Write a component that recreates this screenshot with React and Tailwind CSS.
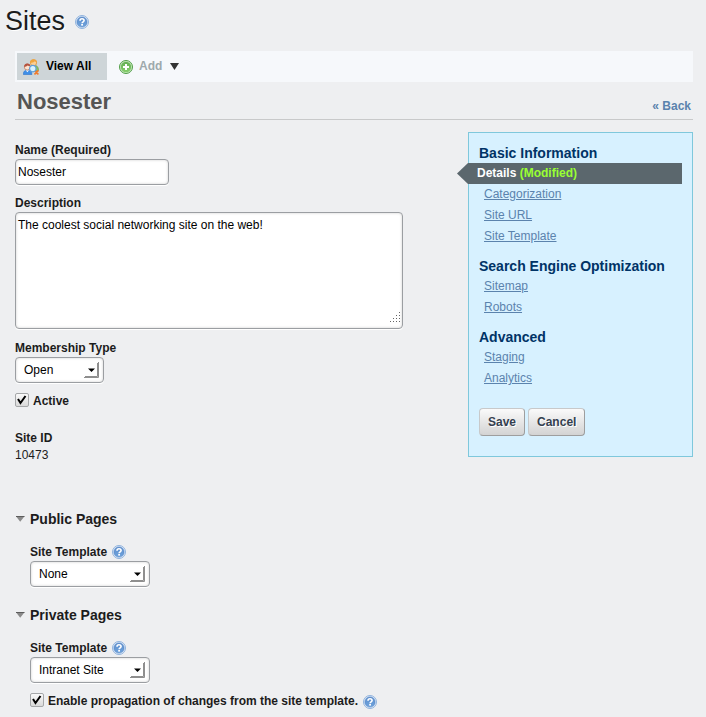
import { useState } from "react";

function HelpIcon({ label = "Help" }) {
  return (
    <svg role="img" aria-label={label} className="h-[14px] w-[14px] shrink-0" viewBox="0 0 14 14">
      <defs>
        <linearGradient id="help-fill" x1="0" y1="0" x2="0" y2="1">
          <stop offset="0" stopColor="#5f8fcd" />
          <stop offset="1" stopColor="#6fa3dc" />
        </linearGradient>
      </defs>
      <circle cx="7" cy="7" r="6.5" fill="#dfeaf8" stroke="#8fb2dd" strokeWidth="1" />
      <circle cx="7" cy="7" r="5.1" fill="url(#help-fill)" stroke="#4c7fc0" strokeWidth=".5" />
      <path d="M5 5.700C5 4.400 5.900 3.700 7 3.700s2.100.6 2.100 1.800C9.100 6.800 7.100 6.800 7.100 8.200" fill="none" stroke="#fff" strokeWidth="1.600" />
      <rect x="6.200" y="9" width="1.800" height="1.600" fill="#fff" />
    </svg>
  );
}

function UsersIcon() {
  return (
    <svg aria-hidden="true" className="h-4 w-4 shrink-0" viewBox="0 0 16 16">
      <path d="M8 9c0-2 1-2.800 3-2.800s4.500.8 4.500 5.300H8z" fill="#8fc45c" stroke="#6a9c42" strokeWidth=".6" />
      <circle cx="10.500" cy="3.800" r="3.100" fill="#fbcf94" stroke="#dd9334" strokeWidth=".8" />
      <path d="M7 4.200C6.800 1.200 8.400.2 10.600.2s3.700 1.200 3.400 4c-.9-1-1.500-1.500-2.100-1.900-1 .9-3 1.600-4.900 1.900z" fill="#f0a53e" />
      <path d="M.3 15.500c0-3 1.300-4.300 4-4.300s4.600 1.300 4.600 4.300z" fill="#3f8fe8" stroke="#2d74cc" strokeWidth=".6" />
      <path d="M2.800 11.300l1.600 1.900 1.600-1.900z" fill="#fff" />
      <circle cx="4.300" cy="8" r="3" fill="#fde3cf" stroke="#b0644a" strokeWidth=".6" />
      <path d="M1.200 8c-.3-2.400 1.100-3.600 3.100-3.600s3.200 1.200 3 2.900c-1.200 0-2-.3-2.600-.8-.9.900-2.200 1.400-3.500 1.500z" fill="#b5533f" />
      <path d="M12 12l2.800 2.800M14.800 12L12 14.800" stroke="#f07a2c" strokeWidth="1.800" strokeLinecap="round" />
      <circle cx="9.800" cy="9.600" r="3.200" fill="#d8f2ff" stroke="#5f9fd8" strokeWidth="1.200" />
    </svg>
  );
}

function AddIcon() {
  return (
    <svg aria-hidden="true" className="h-[14px] w-[14px] shrink-0" viewBox="0 0 14 14">
      <defs>
        <linearGradient id="add-fill" x1="0" y1="0" x2="0" y2="1">
          <stop offset="0" stopColor="#63ae55" />
          <stop offset="1" stopColor="#86cf6c" />
        </linearGradient>
      </defs>
      <circle cx="7" cy="7" r="6.500" fill="#cbe9c0" stroke="#4f9d46" />
      <circle cx="7" cy="7" r="5.200" fill="url(#add-fill)" />
      <path d="M7 4v6M4 7h6" stroke="#fff" strokeWidth="2" />
    </svg>
  );
}

function SelectField({ id, label, help, options, className }) {
  return (
    <div>
      <div className="flex h-[18px] items-center gap-[5px]">
        <label htmlFor={id} className="leading-[18px] font-bold">{label}</label>
        {help && <HelpIcon />}
      </div>
      <div className={"relative " + className}>
        <select
          id={id}
          className="block h-[26px] w-full appearance-none rounded border border-[#9b9ea2] bg-white pr-6 pl-2 text-black shadow-[inset_0_0_3px_#d0d0d0,0_1px_0_#fff]"
        >
          {options.map((option) => (
            <option key={option}>{option}</option>
          ))}
        </select>
        <svg aria-hidden="true" className="pointer-events-none absolute top-[5px] right-[5px] h-4 w-[15px]" viewBox="0 0 15 16">
          <path d="M0 15.500h14.500V0M1 14.500h12.500V1" fill="none" stroke="#8f8f8f" strokeWidth="1" />
          <path d="M4 6.500h7L7.500 10z" fill="#000" />
        </svg>
      </div>
    </div>
  );
}

function CheckField({ id, label, help }) {
  const [checked, setChecked] = useState(true);
  return (
    <div className="flex h-[17px] items-start">
      <span className="relative mr-1 h-[14px] w-[14px] shrink-0">
        <input
          id={id}
          type="checkbox"
          checked={checked}
          onChange={() => setChecked(!checked)}
          className="peer block h-[14px] w-[14px] appearance-none rounded-[2px] border border-[#a5a7a9] bg-linear-to-b from-[#fafafa] to-[#d9d9d9]"
        />
        <svg aria-hidden="true" className="pointer-events-none absolute inset-0 hidden h-[14px] w-[14px] peer-checked:block" viewBox="0 0 14 14">
          <path d="M3 6l2.500 4L10.500 3" fill="none" stroke="#000" strokeWidth="2" />
        </svg>
      </span>
      <label htmlFor={id} className="font-bold">{label}</label>
      {help && <span className="mt-[2px] ml-[5px]"><HelpIcon /></span>}
    </div>
  );
}

function SectionTitle({ children }) {
  return (
    <h3 className="text-[14px] leading-[18px] font-bold">
      <button type="button" className="flex items-center gap-[5px]">
        <svg aria-hidden="true" className="h-[6px] w-[10px]" viewBox="0 0 10 6">
          <path d="M1 .3h8.500L5.200 5.700z" fill="#8a8a8a" />
          <path d="M1 .5h8.500" stroke="#5c5c5c" strokeWidth="1" />
        </svg>
        {children}
      </button>
    </h3>
  );
}

function NavGroup({ title, current, links }) {
  return (
    <div>
      <h3 className="text-[14px] leading-5 font-bold text-[#036]">{title}</h3>
      <ul>
        {current && (
          <li className="relative -ml-[11px] h-[21px] bg-[#5b676d] pl-[9px] leading-[20px] font-bold text-white">
            <svg aria-hidden="true" className="absolute top-0 -left-[11px] h-[21px] w-[11px]" viewBox="0 0 11 21">
              <path d="M11 0v21L0 10.500z" fill="#5b676d" />
            </svg>
            <a href="#details">{current} <span className="text-[#9f3]">(Modified)</span></a>
          </li>
        )}
        {links.map((link) => (
          <li key={link} className="pl-[5px] leading-[21px]">
            <a href="#section" className="text-[#5b83ad] underline">{link}</a>
          </li>
        ))}
      </ul>
    </div>
  );
}

const buttonClass =
  "h-7 rounded border border-[#c8c9ca] border-r-[#9e9e9e] border-b-[#9e9e9e] bg-linear-to-b from-[#fafafa] to-[#d3d3d3] px-2 font-bold text-[#34404f] [text-shadow:1px_1px_#fff]";

export default function App() {
  return (
    <div className="min-h-screen bg-[#eeeff1] pb-[7px] font-['Liberation_Sans',Arial,sans-serif] text-[12px] leading-[17px] text-[#1c1c1c]">
      <header className="flex h-[51px] items-start gap-[10px] px-[5px] pt-[5px]">
        <h1 className="text-[27px] leading-8 [text-shadow:1px_1px_#fff]">Sites</h1>
        <span className="mt-[10px]"><HelpIcon /></span>
      </header>

      <div className="mr-[13px] ml-[15px]">
        <nav className="flex h-[31px] items-center bg-[#f6f8fb] px-[2px] font-bold">
          <a href="#all" className="flex h-[27px] w-[90px] items-center gap-[7px] bg-[#ced5d8] pl-[6px] text-black">
            <UsersIcon />
            View All
          </a>
          <button type="button" className="ml-3 flex items-center gap-[6px] text-[#9ea9ac]">
            <AddIcon />
            Add
            <svg aria-hidden="true" className="ml-[2px] h-[7px] w-[9px]" viewBox="0 0 9 7">
              <path d="M0 0h9L4.500 7z" fill="#333" />
            </svg>
          </button>
        </nav>

        <div className="flex h-[38px] items-start justify-between border-b border-[#c8c9ca] pt-[6px] pr-[2px] pl-[2px]">
          <h2 className="text-[22px] leading-7 font-bold text-[#555]">Nosester</h2>
          <a href="#back" className="mt-[10px] text-[12px] font-bold text-[#5b83ad]">« Back</a>
        </div>

        <div className="mt-3 flex items-start justify-between gap-8">
          <form className="min-w-0 flex-1 pt-[9px]">
            <div className="flex flex-col gap-[10px]">
              <div>
                <label htmlFor="name" className="block leading-[18px] font-bold">Name (Required)</label>
                <input
                  id="name"
                  defaultValue="Nosester"
                  className="block h-[26px] w-[154px] rounded border border-[#9b9ea2] bg-white px-[2px] text-black shadow-[inset_0_0_3px_#d0d0d0,0_1px_0_#fff]"
                />
              </div>
              <div>
                <label htmlFor="description" className="block leading-[17px] font-bold">Description</label>
                <div className="relative max-w-[388px]">
                  <textarea
                    id="description"
                    defaultValue="The coolest social networking site on the web!"
                    className="block h-[117px] w-full resize-none rounded border border-[#9b9ea2] bg-white px-[2px] py-1 text-black shadow-[inset_0_0_3px_#d0d0d0,0_1px_0_#fff]"
                  />
                  <svg aria-hidden="true" className="pointer-events-none absolute right-[3px] bottom-[7px] h-[10px] w-[10px]" viewBox="0 0 10 10">
                    <path d="M9 0h1v1H9zM6 3h1v1H6zM9 3h1v1H9zM3 6h1v1H3zM6 6h1v1H6zM9 6h1v1H9zM0 9h1v1H0zM3 9h1v1H3zM6 9h1v1H6zM9 9h1v1H9z" fill="#666" />
                  </svg>
                </div>
              </div>
              <SelectField id="membership" label="Membership Type" className="w-[89px]" options={["Open", "Restricted", "Private"]} />
              <CheckField id="active" label="Active" />
            </div>

            <dl className="mt-5">
              <dt className="font-bold">Site ID</dt>
              <dd>10473</dd>
            </dl>

            <section className="mt-[46px]">
              <SectionTitle>Public Pages</SectionTitle>
              <div className="mt-[15px] ml-[15px]">
                <SelectField id="public-template" label="Site Template" help className="w-[120px]" options={["None", "Intranet Site"]} />
              </div>
            </section>

            <section className="mt-[19px]">
              <SectionTitle>Private Pages</SectionTitle>
              <div className="mt-[15px] ml-[15px] flex flex-col gap-[10px]">
                <SelectField id="private-template" label="Site Template" help className="w-[120px]" options={["Intranet Site", "None"]} />
                <CheckField id="propagation" label="Enable propagation of changes from the site template." help />
              </div>
            </section>
          </form>

          <aside className="w-[225px] shrink-0 border border-[#7fc8dc] bg-[#d7f1ff] px-[10px] pt-[10px] pb-5">
            <div className="flex flex-col gap-[9px]">
              <NavGroup title="Basic Information" current="Details" links={["Categorization", "Site URL", "Site Template"]} />
              <NavGroup title="Search Engine Optimization" links={["Sitemap", "Robots"]} />
              <NavGroup title="Advanced" links={["Staging", "Analytics"]} />
            </div>
            <div className="mt-[19px] flex gap-[3px]">
              <button type="button" className={buttonClass}>Save</button>
              <button type="button" className={buttonClass}>Cancel</button>
            </div>
          </aside>
        </div>
      </div>
    </div>
  );
}
